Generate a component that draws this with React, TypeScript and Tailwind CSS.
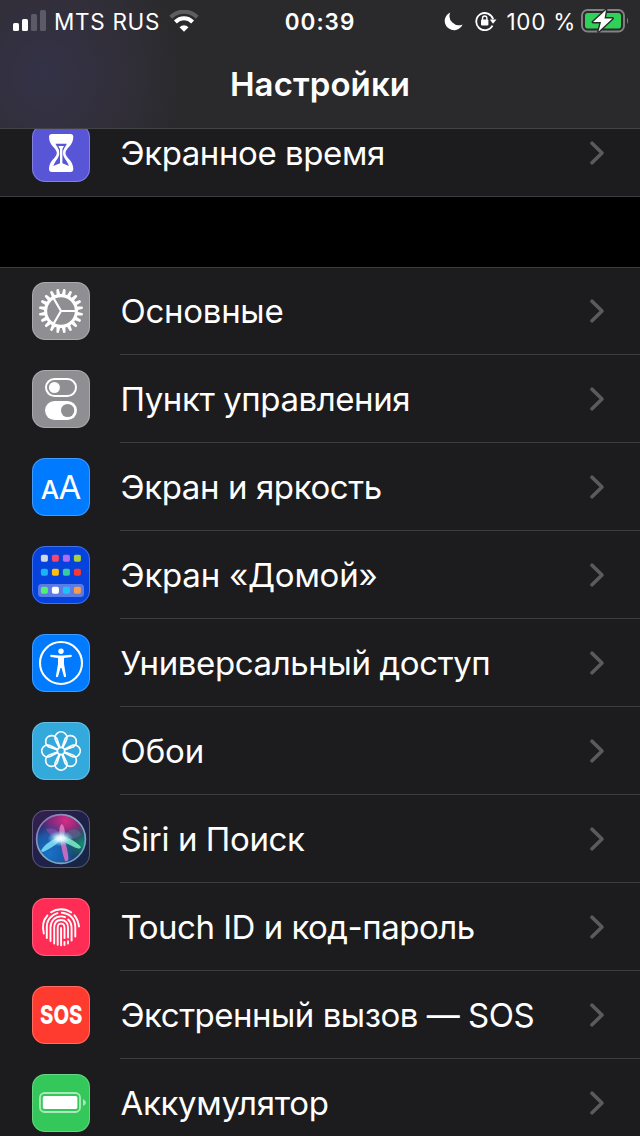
import React from 'react';

interface Item {
  label: string;
  icon: React.ReactNode;
  bg: string;
  tracking: string;
}

const Chevron = () => (
  <svg width="16" height="26" viewBox="0 0 16 26" fill="none" className="mr-[35px] shrink-0">
    <path d="M3 3.2 L13 13 L3 22.8" stroke="#5b5b5f" strokeWidth="3.6" strokeLinecap="round" strokeLinejoin="round" />
  </svg>
);

const HourglassIcon = () => (
  <svg viewBox="0 0 58 58" className="h-full w-full">
    <path
      d="M20 10H38.5Q41.3 10 41.3 13C41.3 22 33.5 24 33.5 29C33.5 34 41.3 36 41.3 45Q41.3 48 38.5 48H20Q17 48 17 45C17 36 24.8 34 24.8 29C24.8 24 17 22 17 13Q17 10 20 10Z"
      fill="#fff"
    />
    <path d="M23.5 19.8H34.8C33.5 23 31 25 31 29C31 34 35 36 37 42L30.4 39.3V25L32 22H26.3L28 25V39.3L21.3 42C23.5 36 27.3 34 27.3 29C27.3 25 25 23 23.5 19.8Z" fill="#5856d6" />
  </svg>
);

const TEETH = Array.from({ length: 20 }, (_, i) => i * 18 + 9);

const GearIcon = () => (
  <svg viewBox="0 0 58 58" className="h-full w-full">
    <g fill="#fff">
      {TEETH.map((a) => (
        <path key={a} d="M27.1 13L27.8 7.2Q29 6.4 30.2 7.2L30.9 13Z" transform={`rotate(${a} 29 29)`} />
      ))}
    </g>
    <circle cx="29" cy="29" r="15.4" fill="none" stroke="#fff" strokeWidth="3.1" />
    <path d="M29 29H44M29 29L21.3 15.8M29 29L21.3 42.2" stroke="#fff" strokeWidth="2.2" />
  </svg>
);

const TogglesIcon = () => (
  <svg viewBox="0 0 58 58" className="h-full w-full">
    <rect x="14" y="9" width="30" height="17" rx="8.5" fill="none" stroke="#fff" strokeWidth="2" />
    <circle cx="22.4" cy="17.5" r="5.5" fill="#fff" />
    <rect x="13" y="31" width="32" height="19" rx="9.5" fill="#fff" />
    <circle cx="35.6" cy="40.5" r="6.6" fill="#8e8e93" />
  </svg>
);

const TextSizeIcon = () => (
  <div className="flex h-full items-baseline justify-center pt-[9px] leading-10 text-white">
    <span className="text-[26px] font-medium tracking-[-0.5px]">A</span>
    <span className="text-[33px]">A</span>
  </div>
);

const APP_DOTS = [
  ['#d3d9e0', '#f5476a', '#b16bf6', '#a7d03e'],
  ['#1db2f7', '#ffbf0b', '#35caa2', '#f93934'],
  ['#50f070', '#ffffff', '#1dc3f5', '#f89c4c'],
];
const DOT_ROWS = [8.8, 22.8, 40.8];

const HomeScreenIcon = () => (
  <svg viewBox="0 0 58 58" className="h-full w-full">
    <rect x="6" y="38" width="46" height="13" rx="3.5" fill="#5b7ce6" />
    {APP_DOTS.map((row, r) =>
      row.map((color, c) => (
        <rect key={color} x={8.9 + c * 11} y={DOT_ROWS[r]} width="7" height="7" rx="1.7" fill={color} />
      ))
    )}
  </svg>
);

const AccessibilityIcon = () => (
  <svg viewBox="0 0 58 58" className="h-full w-full">
    <circle cx="29" cy="29" r="21" fill="none" stroke="#fff" strokeWidth="2.1" />
    <circle cx="29" cy="17.2" r="2.7" fill="#fff" />
    <path
      d="M18.8 20.8L27 21.6H31L39.2 20.8Q40.6 21.8 39.4 22.9L32 24.1V30L34.1 42.3Q33.3 44 32 42.8L29.5 34H28.5L26 42.8Q24.7 44 23.9 42.3L26 30V24.1L18.6 22.9Q17.4 21.8 18.8 20.8Z"
      fill="#fff"
    />
  </svg>
);

const PETALS = [0, 45, 90, 135, 180, 225, 270, 315];

const FlowerIcon = () => (
  <svg viewBox="0 0 58 58" className="h-full w-full" fill="none" stroke="#fff" strokeWidth="1.7">
    {PETALS.map((a) => (
      <path key={a} d="M27.4 25.8L24 19.1A6 6 0 1 1 34 19.1L30.6 25.8" transform={`rotate(${a} 29 29)`} />
    ))}
    <circle cx="29" cy="29" r="3.6" />
  </svg>
);

const SiriIcon = () => (
  <svg viewBox="0 0 58 58" className="h-full w-full">
    <defs>
      <linearGradient id="siriBg" x1="0" y1="0" x2="1" y2="1">
        <stop offset="0" stopColor="#35204f" />
        <stop offset="0.5" stopColor="#20204a" />
        <stop offset="1" stopColor="#17263f" />
      </linearGradient>
      <linearGradient id="siriRing" x1="0" y1="0" x2="1" y2="1">
        <stop offset="0" stopColor="#8a66b4" />
        <stop offset="0.5" stopColor="#8ab3b8" />
        <stop offset="1" stopColor="#5f9ed0" />
      </linearGradient>
      <radialGradient id="siriPink" cx="0.6" cy="0.12" r="0.6">
        <stop offset="0" stopColor="#d52d83" />
        <stop offset="0.6" stopColor="#8c2a83" stopOpacity="0.8" />
        <stop offset="1" stopColor="#5b2a80" stopOpacity="0" />
      </radialGradient>
      <radialGradient id="siriBlue" cx="0.25" cy="0.8" r="0.65">
        <stop offset="0" stopColor="#1673c8" />
        <stop offset="0.6" stopColor="#1a63b5" stopOpacity="0.8" />
        <stop offset="1" stopColor="#1b4a90" stopOpacity="0" />
      </radialGradient>
      <radialGradient id="siriGreen" cx="0.95" cy="0.6" r="0.45">
        <stop offset="0" stopColor="#11906f" />
        <stop offset="1" stopColor="#0a5a5a" stopOpacity="0" />
      </radialGradient>
      <radialGradient id="siriGlow">
        <stop offset="0" stopColor="#fff" />
        <stop offset="0.35" stopColor="#d8fbff" stopOpacity="0.9" />
        <stop offset="1" stopColor="#68d5f0" stopOpacity="0" />
      </radialGradient>
    </defs>
    <rect width="58" height="58" rx="13" fill="url(#siriBg)" />
    <circle cx="29" cy="29" r="24" fill="#272460" />
    <circle cx="29" cy="29" r="24" fill="url(#siriPink)" />
    <circle cx="29" cy="29" r="24" fill="url(#siriBlue)" />
    <circle cx="29" cy="29" r="24" fill="url(#siriGreen)" />
    <path d="M14 19C21 17 27 20 30 28C23 29 17 25 14 19Z" fill="#a84fb0" opacity="0.5" />
    <path d="M28 28C27 20 27 16 30 14C34 19 33 24 31 28Z" fill="#f08cd0" opacity="0.75" />
    <path d="M31 28C36 19 44 16 49 24C46 29 38 30 31 28Z" fill="#5a6a90" opacity="0.55" />
    <path d="M28 27C21 29 12 34 9 41C10 43 13 41 15 40C21 37 26 33 29 29Z" fill="#7fe3fa" opacity="0.85" />
    <path d="M30 26C38 28 46 33 49 37C48 40 44 38 40 36C35 34 31 31 29 29Z" fill="#7cf0c4" opacity="0.85" />
    <path d="M28 28C29 37 31 45 33 51Q36 52 36.5 49C36 42 34 34 32 28Z" fill="#dd70c4" opacity="0.85" />
    <ellipse cx="28.5" cy="28.5" rx="13" ry="8" fill="url(#siriGlow)" />
    <circle cx="29" cy="29" r="24.4" fill="none" stroke="url(#siriRing)" strokeWidth="1.7" />
  </svg>
);

const FingerprintIcon = () => (
  <svg viewBox="0 0 58 58" className="h-full w-full" fill="none" stroke="#fff" strokeWidth="1.9" strokeLinecap="round">
    <path d="M19 14.2A18 18 0 0 1 39.2 14.4" />
    <path d="M11.8 35.5C10.2 29 10.8 22.5 15.4 17.5" />
    <path d="M42.4 17.3Q46 21.5 47 28.5" />
    <path d="M14.8 40V28.5Q15 22.5 19.2 18.8Q22 16.1 25.5 15.2" />
    <path d="M29.8 14.7C38 15.2 43.2 21.3 43.3 29V38.5" />
    <path d="M18.5 43V29C18.8 22.8 23 18.4 29 18.4Q31.2 18.4 33 19.2" />
    <path d="M36.2 21.5Q39.6 25 39.6 30V42.5" />
    <path d="M22.2 45.5V29.5C22.4 24.8 25 22 29 22C33.4 22 36 25.2 36 29.5V39.5" />
    <path d="M25.7 46.8V30C25.7 27 26.8 25.6 29 25.6C31.4 25.6 32.5 27.2 32.5 30V40" />
    <path d="M29.1 30V47.2M32.5 44V47M36 43.3V45.5" />
  </svg>
);

const SosIcon = () => (
  <div className="flex h-full items-center justify-center">
    <span className="scale-x-[0.78] text-[26px] leading-10 font-extrabold">SOS</span>
  </div>
);

const BatteryIcon = () => (
  <svg viewBox="0 0 58 58" className="h-full w-full">
    <rect x="8" y="19" width="40" height="19" rx="4.5" fill="none" stroke="#a9e8b7" strokeWidth="1.9" />
    <rect x="10.8" y="22" width="34.6" height="13" rx="1.8" fill="#fff" />
    <path d="M51 25V32Q54 30.5 54 28.5Q54 26.5 51 25Z" fill="#a9e8b7" />
  </svg>
);

const screenTime: Item = { label: 'Экранное время', icon: <HourglassIcon />, bg: 'bg-[#5856d6]', tracking: 'tracking-[-0.42px]' };

const items: Item[] = [
  { label: 'Основные', icon: <GearIcon />, bg: 'bg-[#8e8e93]', tracking: 'tracking-[-0.28px]' },
  { label: 'Пункт управления', icon: <TogglesIcon />, bg: 'bg-[#8e8e93]', tracking: 'tracking-[-0.43px]' },
  { label: 'Экран и яркость', icon: <TextSizeIcon />, bg: 'bg-[#007aff]', tracking: 'tracking-[-0.4px]' },
  { label: 'Экран «Домой»', icon: <HomeScreenIcon />, bg: 'bg-[#0642dc]', tracking: 'tracking-[-0.22px]' },
  { label: 'Универсальный доступ', icon: <AccessibilityIcon />, bg: 'bg-[#007aff]', tracking: 'tracking-[-0.38px]' },
  { label: 'Обои', icon: <FlowerIcon />, bg: 'bg-[#34aadc]', tracking: 'tracking-[-0.1px]' },
  { label: 'Siri и Поиск', icon: <SiriIcon />, bg: 'bg-[#20204a]', tracking: 'tracking-[-0.4px]' },
  { label: 'Touch ID и код-пароль', icon: <FingerprintIcon />, bg: 'bg-[#ff2d55]', tracking: 'tracking-[-0.5px]' },
  { label: 'Экстренный вызов — SOS', icon: <SosIcon />, bg: 'bg-[#ff3b30]', tracking: 'tracking-[-0.49px]' },
  { label: 'Аккумулятор', icon: <BatteryIcon />, bg: 'bg-[#34c759]', tracking: 'tracking-[-0.32px]' },
];

const Row: React.FC<{ item: Item; divider?: boolean }> = ({ item, divider = true }) => (
  <div className="flex h-[88px] shrink-0 items-center pl-8">
    <div className={`relative h-[58px] w-[58px] shrink-0 rounded-[13px] ${item.bg}`}>
      {item.icon}
      <div className="absolute inset-0 rounded-[13px] border border-white/25" />
    </div>
    <div className={`ml-[30px] flex h-full flex-1 items-center justify-between border-b ${divider ? 'border-[#3d3d41]' : 'border-transparent'}`}>
      <span className={`pl-[0.5px] text-[33px] leading-10 whitespace-nowrap text-white ${item.tracking}`}>{item.label}</span>
      <Chevron />
    </div>
  </div>
);

const StatusBar = () => (
  <div className="grid h-10 grid-cols-3 items-center text-[22.5px] leading-10">
    <div className="flex items-center pl-[13px]">
      <svg width="33" height="22" viewBox="0 0 33 22" className="shrink-0">
        <rect x="0" y="13" width="6" height="8" rx="1.6" fill="#fff" />
        <rect x="9" y="9" width="6" height="12" rx="1.6" fill="#fff" />
        <rect x="18" y="4" width="6" height="17" rx="1.6" fill="#5c5a66" />
        <rect x="27" y="0" width="6" height="21" rx="1.6" fill="#5c5a66" />
      </svg>
      <span className="ml-2 w-[108px] pt-0.5 tracking-[0.7px] whitespace-nowrap">MTS RUS</span>
      <svg width="30" height="22" viewBox="0 0 30 22" className="ml-[7px] shrink-0" fill="none">
        <path d="M1.8 7.2A18.7 18.7 0 0 1 28.2 7.2" stroke="#5d5d62" strokeWidth="4.2" />
        <path d="M6.4 12A12 12 0 0 1 23.6 12" stroke="#fff" strokeWidth="4" />
        <path d="M10.5 17.3Q15 13 19.5 17.3L15 21.8Z" fill="#fff" />
      </svg>
    </div>
    <div className="pt-0.5 text-center font-semibold tracking-[1px]">00:39</div>
    <div className="flex items-center justify-end pr-[11px]">
      <svg width="19" height="19" viewBox="0 0 19 19" className="mr-3 shrink-0">
        <path d="M6.2 0.4A9.3 9.3 0 1 0 18.6 12.5A9.4 9.4 0 0 1 6.2 0.4Z" fill="#fff" />
      </svg>
      <svg width="22" height="20" viewBox="0 0 22 20" className="mr-2.5 shrink-0" fill="none">
        <path d="M17.5 14.6A8.6 8.6 0 1 1 18.1 8.2" stroke="#fff" strokeWidth="1.8" />
        <path d="M14.8 8.5H21.5L18 12.8Z" fill="#fff" />
        <rect x="6" y="8.4" width="7.4" height="6" rx="1" fill="#fff" />
        <path d="M7.5 9V7.2A2.2 2.2 0 0 1 11.9 7.2V9" stroke="#fff" strokeWidth="1.4" />
      </svg>
      <span className="pt-0.5 tracking-[0.7px] whitespace-nowrap">100 %</span>
      <svg width="48" height="24" viewBox="0 0 48 24" className="ml-[5px] shrink-0">
        <rect x="1" y="1" width="42" height="21.5" rx="5.5" fill="none" stroke="#828285" strokeWidth="1.9" />
        <rect x="4" y="4" width="36" height="15.5" rx="2.8" fill="#30d158" />
        <path d="M46 8.5Q48.2 11.7 46 15Z" fill="#828285" />
        <path d="M25 1L12 13H20L17.5 22.5L31.5 9.5H23.5Z" fill="#fff" stroke="#29292b" strokeWidth="2.8" strokeLinejoin="round" paintOrder="stroke" />
      </svg>
    </div>
  </div>
);

const App: React.FC = () => {
  return (
    <div className="flex h-[1136px] w-[640px] flex-col overflow-hidden bg-black font-['Inter','Liberation_Sans',sans-serif] text-white">
      {/* Header */}
      <header className="h-[129px] shrink-0 border-b border-[#434346] bg-[#2a2a2c] bg-[radial-gradient(ellipse_140px_150px_at_45px_75px,#343247_0%,#322f3b_50%,#2a2a2c_100%)]">
        <StatusBar />
        <h1 className="pt-6 text-center text-[33px] leading-10 font-semibold tracking-[0.1px]">Настройки</h1>
      </header>

      {/* Row scrolled under the header */}
      <section className="flex h-[68px] shrink-0 flex-col justify-end overflow-hidden border-b border-[#3d3d41] bg-[#1c1c1e]">
        <div className="-mb-px">
          <Row item={screenTime} divider={false} />
        </div>
      </section>

      <section className="mt-[70px] shrink-0 bg-[#1c1c1e] shadow-[inset_0_1px_0_#3d3d41]">
        {items.map((item) => (
          <Row key={item.label} item={item} />
        ))}
      </section>
    </div>
  );
};

export default App;
